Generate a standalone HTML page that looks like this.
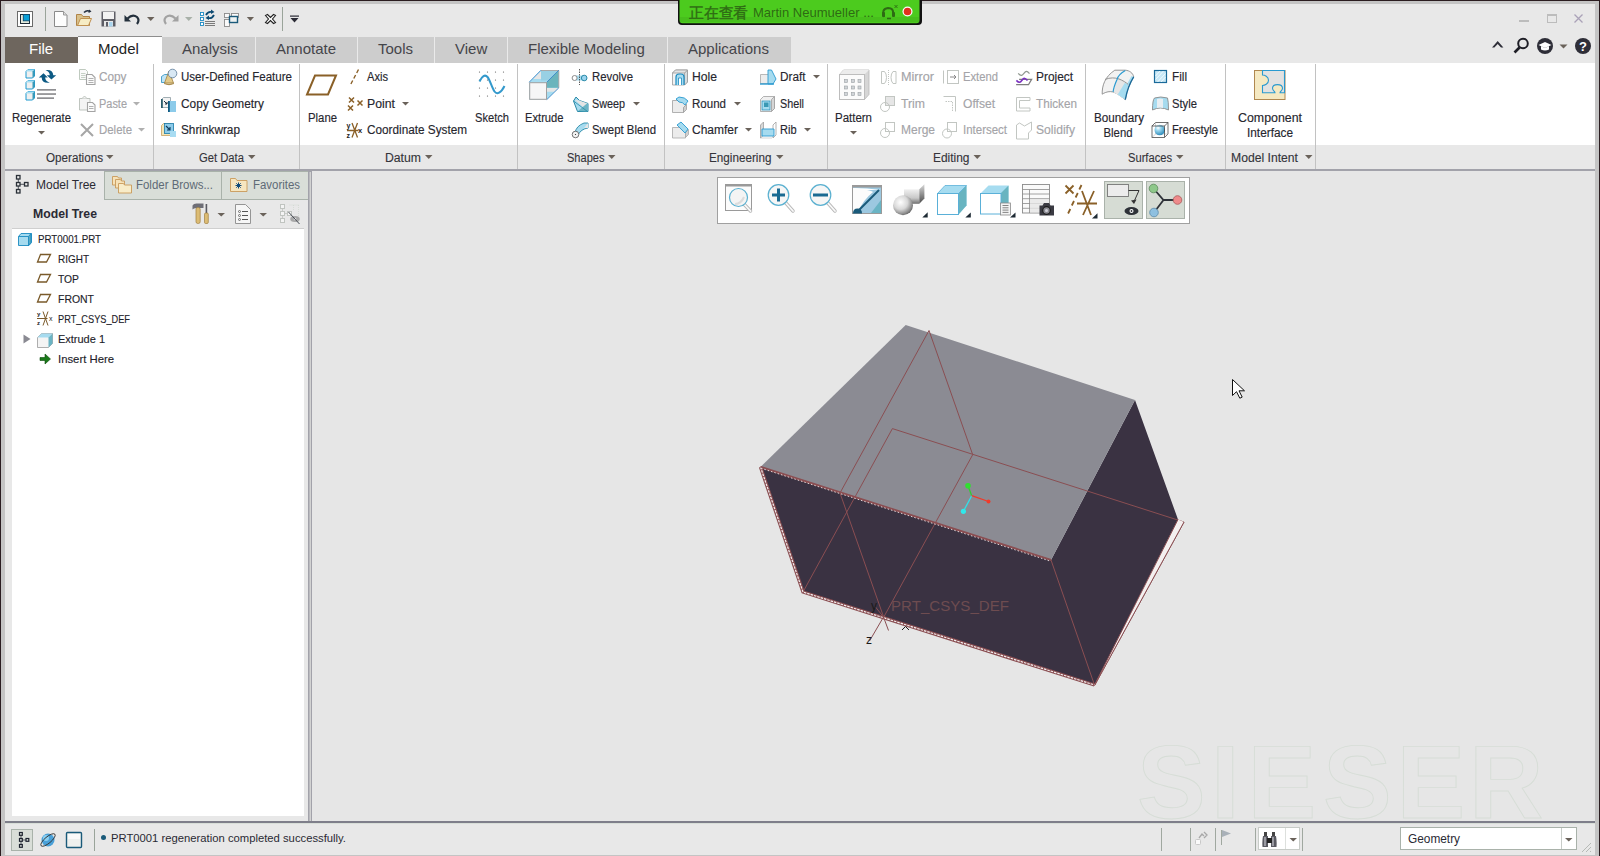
<!DOCTYPE html>
<html>
<head>
<meta charset="utf-8">
<title>Creo Parametric - PRT0001</title>
<style>
html,body{margin:0;padding:0;width:1600px;height:856px;overflow:hidden;background:#e8e8e8;}
svg{display:block;position:absolute;left:0;top:0;}
text{font-family:"Liberation Sans",sans-serif;}
.rb{font-size:12px;fill:#26262e;stroke:#26262e;stroke-width:0.15px;}
.dis{fill:#a4a4a8;stroke:#a4a4a8;}
.lb{font-size:12px;fill:#34343a;stroke:#34343a;stroke-width:0.12px;}
.tab{font-size:15px;fill:#45454a;}
.tr{font-size:10.5px;fill:#22222a;stroke:#22222a;stroke-width:0.12px;}
</style>
</head>
<body>
<svg width="1600" height="856" viewBox="0 0 1600 856">
<!-- ===== window frame ===== -->
<rect x="0" y="0" width="1600" height="856" fill="#c4c4c4"/>
<rect x="0" y="0" width="1600" height="1" fill="#2a1c20"/>
<rect x="0" y="0" width="1" height="856" fill="#2a1c20"/>
<rect x="1599" y="0" width="1" height="856" fill="#2a1c20"/>
<rect x="5" y="4" width="1590" height="852" fill="#e8e8e8"/>

<!-- ===== quick access bar ===== -->
<g id="qab">
<!-- app icon -->
<rect x="17.5" y="11.5" width="15" height="15" fill="#fff" stroke="#6a6a6a"/>
<rect x="20.5" y="14.5" width="9" height="9" fill="#e3eadc" stroke="#1c2a38"/>
<rect x="23.3" y="14.6" width="6.2" height="6.2" fill="#0aa0d8" stroke="#0e4a6e" stroke-width="0.9"/>
<rect x="45" y="7" width="1" height="24" fill="#9aa49a"/>
<!-- new -->
<path d="M54.5 11.5h9l3.5 3.5v11.5h-12.5z" fill="#fdfdfd" stroke="#8a8a8a"/>
<path d="M63.5 11.5v3.5h3.5" fill="#ddd" stroke="#9a9a9a"/>
<!-- open -->
<path d="M76.5 14.5h5l1.5 2h6.5v9h-13z" fill="#d8c08a" stroke="#b08448"/>
<path d="M77.5 25.5l3-7h11l-3 7z" fill="#f6ecc4" stroke="#c09050"/>
<path d="M84 12.5q3-3 6-1" fill="none" stroke="#263040" stroke-width="1.6"/>
<path d="M89 9.5l2.5 2-3 1.5z" fill="#263040"/>
<!-- save -->
<path d="M101.5 11.5h14v15h-14z" fill="#5e5e66"/>
<rect x="103" y="12" width="11" height="7" fill="#f2f2f2"/>
<rect x="104" y="21" width="9" height="5.5" fill="#e8e8e8"/>
<rect x="106" y="22" width="2" height="4.5" fill="#5e5e66"/>
<rect x="109" y="22" width="3.5" height="4.5" fill="#a8d4ee"/>
<!-- undo -->
<path d="M127.5 18.5q5-5 9.5-1.5q3 3 0 7" fill="none" stroke="#24303c" stroke-width="2.2"/>
<path d="M124.5 15v6.5h6.5z" fill="#24303c"/>
<path d="M147 17h7.5l-3.75 4z" fill="#6a625a"/>
<!-- redo -->
<path d="M175.5 18.5q-5-5-9.5-1.5q-3 3 0 7" fill="none" stroke="#a2a2a2" stroke-width="2.2"/>
<path d="M178.5 15v6.5h-6.5z" fill="#a2a2a2"/>
<path d="M185 17h7.5l-3.75 4z" fill="#a8b0a8"/>
<!-- regen -->
<g fill="#fff" stroke="#1d8ac4" stroke-width="0.9"><rect x="200.5" y="12.5" width="3" height="3"/><rect x="200.5" y="17.5" width="3" height="3"/><rect x="200.5" y="22.5" width="3" height="3"/></g>
<g fill="#7a7a7a"><rect x="205" y="21" width="10" height="1"/><rect x="205" y="23" width="10" height="1"/><rect x="205" y="25" width="10" height="1"/></g>
<path d="M206 15q2-4 6-3M214 15q-2 4-6 3" fill="none" stroke="#0d4a72" stroke-width="1.8"/>
<path d="M211 9.5l3.5 2.5-3.5 2zM209 15.5l-3.5 2.5 3.5 2z" fill="#0d4a72"/>
<!-- windows -->
<g fill="#fafafa" stroke="#8a8a8a" stroke-width="0.9"><rect x="224.5" y="13.5" width="5" height="4"/><rect x="231.5" y="13.5" width="7" height="4"/><rect x="224.5" y="19.5" width="5" height="7"/></g>
<rect x="229.5" y="16.5" width="8" height="6" fill="#eef2f2" stroke="#1a5a7a" stroke-width="1.4"/>
<path d="M246.8 17h7.2l-3.6 4z" fill="#6a625a"/>
<!-- close -->
<path d="M265.5 15.5l2-1 3 3 3-3 2 1-3 3.5 3 3.5-2 1-3-3-3 3-2-1 3-3.5z" fill="#fff" stroke="#222" stroke-width="1.1"/>
<rect x="282" y="7" width="1" height="24" fill="#9aa49a"/>
<rect x="290" y="15.5" width="9" height="1.2" fill="#2a2a35"/>
<path d="M290.5 18h8l-4 4.5z" fill="#2a2a35"/>
<!-- window controls -->
<rect x="1519" y="20" width="10" height="2" fill="#bcbcbc"/>
<rect x="1547.5" y="14.5" width="9" height="8" fill="none" stroke="#bcbcbc"/>
<rect x="1547" y="14" width="10" height="2" fill="#bcbcbc"/>
<path d="M1574.5 14.5l8 8M1582.5 14.5l-8 8" stroke="#aaa2b8" stroke-width="1.3"/>
<!-- right help icons -->
<path d="M1492 47.5L1497.7 41L1503.4 47.5L1501 47.5L1497.7 44L1494.4 47.5Z" fill="#2e2e38"/>
<circle cx="1523" cy="43.5" r="4.8" fill="none" stroke="#1e1e26" stroke-width="2"/>
<path d="M1519.5 47.5l-5 5" stroke="#1e1e26" stroke-width="2.6"/>
<circle cx="1545" cy="46" r="8" fill="#2e2e38"/>
<path d="M1538.5 45l6.5-3 6.5 3-6.5 3z" fill="#fff"/>
<path d="M1541 46v3.5q4 2 8 0v-3.5l-4 2z" fill="#fff"/>
<path d="M1559.5 44.5h8l-4 4z" fill="#6a625a"/>
<circle cx="1583" cy="46" r="8" fill="#2e2e38"/>
<text x="1579" y="51" style="font-size:13px;font-weight:bold;fill:#fff">?</text>
</g>

<!-- ===== green banner ===== -->
<g id="banner">
<path d="M678 0v21q0 4 4 4h236q4 0 4-4v-21z" fill="#111"/>
<path d="M679.5 0v20q0 3.3 3 3.3h234q3 0 3-3.3v-20z" fill="#4ccb1e"/>
<rect x="680" y="17" width="239" height="5" fill="#44b81a" opacity="0.6"/>
<text x="689" y="17.5" textLength="59" lengthAdjust="spacingAndGlyphs" style="font-size:15px;fill:#2e6a14;stroke:#2e6a14;stroke-width:0.35px">正在查看</text>
<text x="753" y="17" textLength="121" lengthAdjust="spacingAndGlyphs" style="font-size:13.5px;fill:#2e6a14">Martin Neumueller ...</text>
<path d="M884 17q-3-8 4-9q6 0 5 6" fill="none" stroke="#2e6a14" stroke-width="2"/>
<rect x="882" y="12" width="3" height="5" rx="1" fill="#2e6a14"/><rect x="892" y="12" width="3" height="5" rx="1" fill="#2e6a14"/>
<path d="M887 18.5h4" stroke="#2e6a14" stroke-width="1.5"/>
<path d="M894.5 5l3 3M897.5 5l-3 3" stroke="#2e6a14" stroke-width="0.9"/>
<circle cx="907.5" cy="11.5" r="5" fill="#fff"/>
<circle cx="907.5" cy="11.5" r="3.8" fill="#e0321c"/>
</g>

<!-- ===== tabs ===== -->
<g id="tabs">
<rect x="5" y="37" width="73" height="26" fill="#6e665e"/>
<text x="29" y="54" class="tab" style="fill:#ffffff">File</text>
<rect x="78" y="36" width="84" height="27" fill="#ffffff"/>
<rect x="78" y="36" width="84" height="1" fill="#8e8e8e"/>
<text x="98" y="54" class="tab" style="fill:#1e1e24">Model</text>
<rect x="162" y="37" width="629" height="26" fill="#cdcdcd"/>
<g fill="#eaeaea"><rect x="255" y="37" width="1" height="26"/>
<rect x="357" y="37" width="1" height="26"/>
<rect x="434" y="37" width="1" height="26"/>
<rect x="507" y="37" width="1" height="26"/>
<rect x="667" y="37" width="1" height="26"/></g>
<text x="182" y="54" class="tab">Analysis</text>
<text x="276" y="54" class="tab">Annotate</text>
<text x="378" y="54" class="tab">Tools</text>
<text x="455" y="54" class="tab">View</text>
<text x="528" y="54" class="tab">Flexible Modeling</text>
<text x="688" y="54" class="tab">Applications</text>
</g>

<!-- ===== ribbon body ===== -->
<g id="ribbon">
<rect x="5" y="63" width="1590" height="82" fill="#ffffff"/>
<rect x="5" y="145" width="1590" height="24" fill="#e8e8e8"/>
<rect x="5" y="169" width="1590" height="2.5" fill="#a2a2aa"/>
<g fill="#c2c2c2">
<rect x="153" y="64" width="1" height="105"/>
<rect x="299" y="64" width="1" height="105"/>
<rect x="517" y="64" width="1" height="105"/>
<rect x="664" y="64" width="1" height="105"/>
<rect x="827" y="64" width="1" height="105"/>
<rect x="1085" y="64" width="1" height="105"/>
<rect x="1225" y="64" width="1" height="105"/>
<rect x="1315" y="64" width="1" height="105"/>
</g>
<!-- group labels -->
<text x="46" y="162" textLength="57" lengthAdjust="spacingAndGlyphs" class="lb">Operations</text>
<text x="199" y="162" textLength="45" lengthAdjust="spacingAndGlyphs" class="lb">Get Data</text>
<text x="385" y="162" textLength="36" lengthAdjust="spacingAndGlyphs" class="lb">Datum</text>
<text x="567" y="162" textLength="37.5" lengthAdjust="spacingAndGlyphs" class="lb">Shapes</text>
<text x="709" y="162" textLength="62.5" lengthAdjust="spacingAndGlyphs" class="lb">Engineering</text>
<text x="933" y="162" textLength="36.5" lengthAdjust="spacingAndGlyphs" class="lb">Editing</text>
<text x="1128" y="162" textLength="44" lengthAdjust="spacingAndGlyphs" class="lb">Surfaces</text>
<text x="1231" y="162" textLength="67" lengthAdjust="spacingAndGlyphs" class="lb">Model Intent</text>
<g fill="#6a625a">
<path d="M106 155h7.5l-3.75 4z"/><path d="M248 155h7.5l-3.75 4z"/><path d="M425 155h7.5l-3.75 4z"/><path d="M608 155h7.5l-3.75 4z"/>
<path d="M776 155h7.5l-3.75 4z"/><path d="M973.5 155h7.5l-3.75 4z"/><path d="M1176 155h7.5l-3.75 4z"/><path d="M1305 155h7.5l-3.75 4z"/>
</g>
<!-- ribbon texts -->
<text x="12" y="122" textLength="59" lengthAdjust="spacingAndGlyphs" class="rb">Regenerate</text>
<text x="99" y="81" textLength="27.5" lengthAdjust="spacingAndGlyphs" class="rb dis">Copy</text>
<text x="99" y="108" textLength="28" lengthAdjust="spacingAndGlyphs" class="rb dis">Paste</text>
<text x="99" y="134" textLength="33" lengthAdjust="spacingAndGlyphs" class="rb dis">Delete</text>
<text x="181" y="81" textLength="111" lengthAdjust="spacingAndGlyphs" class="rb">User-Defined Feature</text>
<text x="181" y="108" textLength="83" lengthAdjust="spacingAndGlyphs" class="rb">Copy Geometry</text>
<text x="181" y="134" textLength="59" lengthAdjust="spacingAndGlyphs" class="rb">Shrinkwrap</text>
<text x="308" y="122" textLength="29" lengthAdjust="spacingAndGlyphs" class="rb">Plane</text>
<text x="367" y="81" textLength="21" lengthAdjust="spacingAndGlyphs" class="rb">Axis</text>
<text x="367" y="108" textLength="28" lengthAdjust="spacingAndGlyphs" class="rb">Point</text>
<text x="367" y="134" textLength="100" lengthAdjust="spacingAndGlyphs" class="rb">Coordinate System</text>
<text x="475" y="122" textLength="34" lengthAdjust="spacingAndGlyphs" class="rb">Sketch</text>
<text x="525" y="122" textLength="38.5" lengthAdjust="spacingAndGlyphs" class="rb">Extrude</text>
<text x="592" y="81" textLength="41" lengthAdjust="spacingAndGlyphs" class="rb">Revolve</text>
<text x="592" y="108" textLength="33" lengthAdjust="spacingAndGlyphs" class="rb">Sweep</text>
<text x="592" y="134" textLength="64" lengthAdjust="spacingAndGlyphs" class="rb">Swept Blend</text>
<text x="692" y="81" textLength="25" lengthAdjust="spacingAndGlyphs" class="rb">Hole</text>
<text x="692" y="108" textLength="34" lengthAdjust="spacingAndGlyphs" class="rb">Round</text>
<text x="692" y="134" textLength="46" lengthAdjust="spacingAndGlyphs" class="rb">Chamfer</text>
<text x="780" y="81" textLength="25.5" lengthAdjust="spacingAndGlyphs" class="rb">Draft</text>
<text x="780" y="108" textLength="24" lengthAdjust="spacingAndGlyphs" class="rb">Shell</text>
<text x="780" y="134" textLength="16.5" lengthAdjust="spacingAndGlyphs" class="rb">Rib</text>
<text x="835" y="122" textLength="37" lengthAdjust="spacingAndGlyphs" class="rb">Pattern</text>
<text x="901" y="81" textLength="33" lengthAdjust="spacingAndGlyphs" class="rb dis">Mirror</text>
<text x="901" y="108" textLength="24" lengthAdjust="spacingAndGlyphs" class="rb dis">Trim</text>
<text x="901" y="134" textLength="34" lengthAdjust="spacingAndGlyphs" class="rb dis">Merge</text>
<text x="963" y="81" textLength="35" lengthAdjust="spacingAndGlyphs" class="rb dis">Extend</text>
<text x="963" y="108" textLength="32" lengthAdjust="spacingAndGlyphs" class="rb dis">Offset</text>
<text x="963" y="134" textLength="44" lengthAdjust="spacingAndGlyphs" class="rb dis">Intersect</text>
<text x="1036" y="81" textLength="37" lengthAdjust="spacingAndGlyphs" class="rb">Project</text>
<text x="1036" y="108" textLength="41" lengthAdjust="spacingAndGlyphs" class="rb dis">Thicken</text>
<text x="1036" y="134" textLength="39" lengthAdjust="spacingAndGlyphs" class="rb dis">Solidify</text>
<text x="1094" y="122" textLength="50" lengthAdjust="spacingAndGlyphs" class="rb">Boundary</text>
<text x="1103.5" y="137" textLength="29" lengthAdjust="spacingAndGlyphs" class="rb">Blend</text>
<text x="1172" y="81" textLength="15" lengthAdjust="spacingAndGlyphs" class="rb">Fill</text>
<text x="1172" y="108" textLength="25" lengthAdjust="spacingAndGlyphs" class="rb">Style</text>
<text x="1172" y="134" textLength="46" lengthAdjust="spacingAndGlyphs" class="rb">Freestyle</text>
<text x="1238" y="122" textLength="64" lengthAdjust="spacingAndGlyphs" class="rb">Component</text>
<text x="1247" y="137" textLength="46" lengthAdjust="spacingAndGlyphs" class="rb">Interface</text>
<!-- small dropdown arrows -->
<g fill="#6a625a">
<path d="M38 131h7l-3.5 3.5z"/>
<path d="M133 102h7l-3.5 3.5z" fill="#b0b0b0"/><path d="M138 128h7l-3.5 3.5z" fill="#b0b0b0"/>
<path d="M402 102h7l-3.5 3.5z"/>
<path d="M633 102h7l-3.5 3.5z"/>
<path d="M734 102h7l-3.5 3.5z"/><path d="M745 128h7l-3.5 3.5z"/>
<path d="M813 75h7l-3.5 3.5z"/><path d="M804 128h7l-3.5 3.5z"/>
<path d="M850 131h7l-3.5 3.5z"/>
</g>
</g>
<g id="ricons">

<!-- Regenerate -->
<g transform="translate(25.5 69)">
<path d="M0.5 2.5l2-2h6.5v6.5l-2 2h-6.5z" fill="#f0f0f0" stroke="#1c9ad0" stroke-width="1"/>
<path d="M0.5 2.5l2-2h6.5l-2 2z" fill="#a8def2"/>
<path d="M9 0.5v6.5l-2 2v-6.5z" fill="#3a9ab8"/>
</g>
<g transform="translate(25.5 80)">
<path d="M0.5 2.5l2-2h6.5v6.5l-2 2h-6.5z" fill="#f0f0f0" stroke="#1c9ad0" stroke-width="1"/>
<path d="M0.5 2.5l2-2h6.5l-2 2z" fill="#a8def2"/>
<path d="M9 0.5v6.5l-2 2v-6.5z" fill="#3a9ab8"/>
</g>
<g transform="translate(25.5 91)">
<path d="M0.5 2.5l2-2h6.5v6.5l-2 2h-6.5z" fill="#f0f0f0" stroke="#1c9ad0" stroke-width="1"/>
<path d="M0.5 2.5l2-2h6.5l-2 2z" fill="#a8def2"/>
<path d="M9 0.5v6.5l-2 2v-6.5z" fill="#3a9ab8"/>
</g>
<g fill="#8f8f92"><rect x="37" y="89" width="19" height="1.7"/><rect x="37" y="93.2" width="19" height="1.7"/><rect x="37" y="97.3" width="17" height="1.7"/></g>
<path d="M45.5 70.2Q52.8 69.3 53.3 75.3H56.2L51.4 79.4L46.8 75.3H49.8Q49.5 71.3 45.5 70.2Z" fill="#0d5a84"/>
<path d="M38.8 77.5L43.5 73.2L47.8 77.5H45.1Q45.4 81.2 49.8 82.7Q41.8 83.8 41.7 77.5Z" fill="#0d5a84"/>
<!-- Copy / Paste / Delete (disabled) -->
<path d="M79.5 69.5h6l2 2v8h-8z" fill="#fafafa" stroke="#b8c4b8" stroke-width="0.9"/>
<path d="M81 73.5h4.5M81 75.5h4.5M81 77.5h4.5" stroke="#c0ccc0" stroke-width="0.9"/>
<path d="M86.5 74.5h5.5l3 3v7h-8.5z" fill="#fcfcfc" stroke="#a4a4a4" stroke-width="1.1"/>
<path d="M88.5 78.5h5M88.5 80.5h5M88.5 82.5h5" stroke="#a8a8a8" stroke-width="0.9"/>
<path d="M79.5 98.5h10.5v11.5h-10.5z" fill="#f4f4f4" stroke="#b8beb8" stroke-width="0.9"/>
<path d="M82 98.5l2.5-2.5 2.5 2.5" fill="#f4f4f4" stroke="#b8beb8" stroke-width="0.9"/>
<path d="M87.5 102.5h5l2.5 2.5v6.5h-7.5z" fill="#fcfcfc" stroke="#a4a4a4" stroke-width="1.1"/>
<path d="M89 106.5h4.5M89 108.5h4.5" stroke="#a8a8a8" stroke-width="0.9"/>
<path d="M81 124l12 12M93 124l-12 12" stroke="#a6a6a6" stroke-width="2"/>
<!-- UDF -->
<path d="M161.5 76.5l3-2h7v6l-3 2h-7z" fill="#bfe4f6" stroke="#2a8ec0" stroke-width="0.8"/>
<path d="M169 71l-4.5 12h9z" fill="#e2c98a" stroke="#a08040" stroke-width="0.8"/>
<circle cx="172.5" cy="73.5" r="4.3" fill="#d8e8f4" stroke="#5a7a98" stroke-width="0.8"/>
<path d="M164 83.5q5 2.5 10 0" fill="#c8a860" stroke="#98783a" stroke-width="0.8"/>
<!-- Copy Geometry -->
<path d="M161.5 99.5l2-2h7v8l-2 2h-7z" fill="#f2f2f2" stroke="#8a9aa2" stroke-width="0.8"/>
<rect x="161" y="99" width="1.8" height="9" fill="#2a5a6a"/>
<path d="M164 101l3 3M167 102v2h-2" stroke="#1a2a3a" stroke-width="1" fill="none"/>
<rect x="169" y="101" width="7" height="11" fill="#8ccbea"/>
<rect x="168" y="101" width="1.8" height="11" fill="#0e5a82"/>
<!-- Shrinkwrap -->
<path d="M161.5 125.5l2-2h7v12h-9z" fill="#f4e6b8" stroke="#c8a060" stroke-width="0.8"/>
<rect x="164.5" y="123.5" width="9" height="10" fill="#8ccbea" stroke="#1a7aa8" stroke-width="0.8"/>
<path d="M166 126l4 4M170 127v3h-3" stroke="#0e3a5a" stroke-width="1.1" fill="none"/>
<rect x="170" y="131" width="6" height="6" fill="#a8dcf2"/>
<!-- Plane -->
<path d="M315 75.5h21l-8 19h-21z" fill="none" stroke="#8a6028" stroke-width="2"/>
<!-- Axis -->
<path d="M358.5 69.5l-1.8 3.5M355.6 75l-1.8 3.5M352.7 80.5l-1.8 3.5" stroke="#8a6028" stroke-width="1.4"/>
<!-- Point -->
<g stroke="#8a6028" stroke-width="1.5"><path d="M349 97.5l5 5M354 97.5l-5 5M357.5 100.5l5 5M362.5 100.5l-5 5M348 105.5l5 5M353 105.5l-5 5"/></g>
<!-- Coordinate System -->
<path d="M352 123l5.5 14.5M357.5 123l-5.5 14.5M347 130.5h11.5" stroke="#8a6028" stroke-width="1.3"/>
<text x="346.5" y="128" style="font-size:7px;fill:#222;font-weight:bold">y</text>
<text x="346.5" y="137.5" style="font-size:7px;fill:#222;font-weight:bold">z</text>
<text x="358" y="133" style="font-size:7.5px;fill:#222;font-weight:bold">x</text>
<!-- Sketch -->
<g fill="#555"><circle cx="479.5" cy="72" r="0.6"/><circle cx="487.5" cy="72" r="0.6"/><circle cx="495.5" cy="72" r="0.6"/><circle cx="503.5" cy="72" r="0.6"/>
<circle cx="479.5" cy="80" r="0.6"/><circle cx="487.5" cy="80" r="0.6"/><circle cx="495.5" cy="80" r="0.6"/><circle cx="503.5" cy="80" r="0.6"/>
<circle cx="479.5" cy="88" r="0.6"/><circle cx="487.5" cy="88" r="0.6"/><circle cx="495.5" cy="88" r="0.6"/><circle cx="503.5" cy="88" r="0.6"/>
<circle cx="479.5" cy="96" r="0.6"/><circle cx="487.5" cy="96" r="0.6"/><circle cx="495.5" cy="96" r="0.6"/><circle cx="503.5" cy="96" r="0.6"/></g>
<path d="M479.5 81.5C482 76 485 74 487.5 77C490 80 492 88 494.5 91.5C497 95 501 93 504.5 86" fill="none" stroke="#3399cc" stroke-width="2"/>
<!-- Extrude -->
<path d="M529.2 82.2L541 70.2H558.8V87.8L546.8 99.6H529.2Z" fill="#a6dcf0"/>
<rect x="541" y="70.5" width="17.8" height="10" fill="#98d0e4"/>
<path d="M546.8 82.2L558.8 70.2V87.8H546.8Z" fill="#6ab4bc"/>
<path d="M546.8 88H558.8L555 91.8H546.8Z" fill="#e4e6e6"/>
<path d="M533 79L541 71V79Z" fill="#e6e6e6"/>
<path d="M541 70.5H558.8V87.8" fill="none" stroke="#a8a8a8" stroke-width="1"/>
<path d="M529.2 82.2L541 70.2M546.8 82.2L558.8 70.2M558.8 87.8L546.8 99.6" fill="none" stroke="#3a88c8" stroke-width="0.9"/>
<rect x="529.7" y="82.7" width="16.8" height="16.6" fill="#f6f6f6" stroke="#a0a0a0" stroke-width="1"/>
<!-- Revolve -->
<path d="M576 75.5h8q3 0 3 2.5t-3 2.5h-8z" fill="#a6dbef"/>
<circle cx="574.6" cy="78" r="2.5" fill="#fff" stroke="#8a8a8a" stroke-width="1"/>
<circle cx="584.2" cy="78" r="2.8" fill="#9ad4ee" stroke="#2a8aa8" stroke-width="1"/>
<path d="M579.5 69v16" stroke="#333" stroke-width="0.8" stroke-dasharray="1.5 1"/>
<!-- Sweep -->
<path d="M573.5 101l2.5-4 3.5 3.5 8.5 3v8h-10.5z" fill="#a6dbef" stroke="#2a8aa8" stroke-width="1"/>
<path d="M575 100l4.5 0.5 8 3-4 4z" fill="#e4e4e4"/>
<path d="M578 111l9.5-8v8.5z" fill="#6ab4c4"/>
<path d="M573.5 101l14 10.5" stroke="#2a8aa8" stroke-width="0.8"/>
<!-- Swept Blend -->
<path d="M575 133q1-7 9-10h4v5q-7 1-10 7z" fill="#a6dbef" stroke="#2a8aa8" stroke-width="0.9"/>
<path d="M588 123v5h-4z" fill="#e4e4e4"/>
<circle cx="575.5" cy="134.5" r="3.3" fill="#f2f2f2" stroke="#666" stroke-width="0.9"/>
<circle cx="575.5" cy="134.5" r="0.6" fill="#222"/>
<!-- Engineering: Hole -->
<g stroke="#9a9a9a" stroke-width="0.8">
<path d="M672.5 73l3-3h12v12l-3 3h-12z" fill="#f2f2f2"/>
<path d="M684.5 73l3-3v12l-3 3z" fill="#d6dde0"/>
<path d="M672.5 73l3-3h12l-3 3z" fill="#e4e4e4"/>
</g>
<path d="M676 85v-8q0-3 3-3h2q3 0 3 3v8" fill="#a6dbef" stroke="#1a8ac0" stroke-width="1.2"/>
<path d="M678.5 85v-7h3v7" fill="#fff" stroke="#1a8ac0" stroke-width="0.8"/>
<!-- Round -->
<g stroke="#a0a0a0" stroke-width="0.8">
<path d="M672.5 100.5h7q5 0 7 4l-3 3v5h-11z" fill="#ececec"/>
<path d="M683.5 107.5l3-3v5l-3 3z" fill="#d0d0d0"/>
</g>
<path d="M676 99l3-2q6 0 9 4l-3 4q-2-3-6-3z" fill="#a6dbef" stroke="#2a9ad0" stroke-width="0.9"/>
<!-- Chamfer -->
<g stroke="#a8a8a8" stroke-width="0.8">
<path d="M672.5 127.5h8l5 5v5.5h-13z" fill="#ececec"/>
<path d="M685.5 132.5l3-3v5l-3 3z" fill="#d0d0d0"/>
</g>
<path d="M677 125l4-3 7 7-3 4z" fill="#a6dbef" stroke="#2a9ad0" stroke-width="0.9"/>
<!-- Draft -->
<g stroke="#a8a8a8" stroke-width="0.8">
<path d="M760.5 74.5h8v9h-8z" fill="#ececec"/>
</g>
<path d="M768 70l3.5 0 4.5 9-3 5h-5z" fill="#a6dbef" stroke="#2a9ad0" stroke-width="0.9"/>
<path d="M760 84h14" stroke="#2a9ad0" stroke-width="1.4"/>
<!-- Shell -->
<g stroke="#a0a0a0" stroke-width="0.8">
<path d="M760.5 99.5l3-3h11v12l-3 3h-11z" fill="#f0f0f0"/>
<path d="M771.5 99.5l3-3v12l-3 3z" fill="#d6d6d6"/>
</g>
<rect x="762" y="101" width="8" height="9" fill="#a6dbef" stroke="#1a8ab8" stroke-width="0.7"/>
<rect x="764" y="102.5" width="4.5" height="4.5" fill="#3a98b4"/>
<!-- Rib -->
<path d="M760.5 125l3-3v13l-3 3z" fill="#d8d8d8" stroke="#a0a0a0" stroke-width="0.8"/>
<path d="M773 125l3-3v13l-3 3z" fill="#fff" stroke="#a0a0a0" stroke-width="0.8"/>
<path d="M762 129h12v7h-12z" fill="#a6dbef" stroke="#2a9ad0" stroke-width="0.9"/>
<path d="M760.5 138h12" stroke="#999" stroke-width="0.8" stroke-dasharray="1 1"/>
<!-- Pattern -->
<path d="M839.5 74.5l4-4.5h25.5v24.5l-4.5 5z" fill="#d6d6d6" stroke="#b8b8b8" stroke-width="0.8"/>
<path d="M839.5 74.5l4-4.5h25.5l-4.5 4.5z" fill="#ececec"/>
<rect x="839.5" y="74.5" width="25" height="25" fill="#fbfbfb" stroke="#bdbdbd" stroke-width="1"/>
<g fill="#d0d4d8" stroke="#9aa0a4" stroke-width="0.6">
<rect x="844.5" y="79.5" width="3" height="3"/><rect x="851.5" y="79.5" width="3" height="3"/><rect x="858" y="79.5" width="3" height="3"/>
<rect x="844.5" y="86" width="3" height="3"/><rect x="851.5" y="86" width="3" height="3"/><rect x="858" y="86" width="3" height="3"/>
<rect x="844.5" y="92.5" width="3" height="3"/><rect x="851.5" y="92.5" width="3" height="3"/><rect x="858" y="92.5" width="3" height="3"/>
</g>
<!-- disabled editing icons -->
<g fill="none" stroke="#c2c6c2" stroke-width="1">
<path d="M881.5 71.5h3q2 2 2 6t-2 6h-3zM896 71.5h-3q-2 2-2 6t2 6h3z"/>
<path d="M888.5 70v15" stroke-dasharray="1 1"/>
<rect x="885.5" y="96.5" width="9" height="9" fill="#e6e6e6"/><circle cx="885" cy="107" r="4.5"/>
<rect x="885.5" y="122.5" width="9" height="9"/><circle cx="885" cy="133" r="4.5"/>
<rect x="947.5" y="70.5" width="11" height="13"/><path d="M943.5 70.5v13"/>
<path d="M943.5 96.5h12v15" /><path d="M945.5 101.5h7v10" stroke-dasharray="1.5 1"/>
<rect x="947.5" y="122.5" width="9" height="9"/><circle cx="947" cy="133.5" r="4.5"/>
<path d="M1030 97.5h-13.5v13.5h13.5v-3h-10.5v-7.5h10.5z"/>
<path d="M1016.5 125l3-2 5 3 7-4v8l-3 3v6h-12z"/>
</g>
<path d="M950 77h6M954 75l2 2-2 2" fill="none" stroke="#888" stroke-width="1"/>
<!-- Project -->
<path d="M1018.2 73.4C1019.5 75 1020.5 75.6 1021.6 75.4C1023.5 75 1024.5 71.3 1026.4 71.3C1027.8 71.3 1028.7 72.6 1029.5 73.6" fill="none" stroke="#909890" stroke-width="1.2"/>
<path d="M1019.1 79.3H1031.6L1028.5 84.7H1016.1" fill="none" stroke="#7e7e7e" stroke-width="1.3"/>
<path d="M1016.4 80.4C1017.5 81.6 1018.6 82.3 1019.7 82.2C1021.5 82 1022.5 78.3 1024.3 78.3C1025.6 78.3 1026.6 79.5 1027.5 80.6" fill="none" stroke="#7a30c0" stroke-width="1.6"/>
<!-- Boundary Blend -->
<path d="M1102.2 94.2C1102 86 1104.5 77 1114.8 70.2H1125.3C1129.5 70.5 1133 73 1133.7 76.9C1130.5 82 1127 90 1125.3 99.6C1121 96.5 1116 92 1110.6 91.6C1107 91.5 1104 93 1102.2 94.2Z" fill="#f2f2f2" stroke="#8a8a8a" stroke-width="0.9"/>
<path d="M1117.7 77.8L1128.3 84.5L1125.3 99.6L1113.1 92Z" fill="#e6e6e6"/>
<path d="M1124.9 82.8L1128.3 84.9L1125.3 99.6L1117.7 94.6Z" fill="#a6dcf0"/>
<path d="M1131.5 76L1133.7 76.9L1128.3 84.9L1127 84Z" fill="#a6dcf0"/>
<path d="M1105.1 79.4C1110 77.5 1115 77.5 1119 79C1123 80.5 1126 82.5 1128.3 84.5" fill="none" stroke="#8a8a8a" stroke-width="0.9"/>
<path d="M1125.3 70.6C1121 73 1118 76 1117 79.5C1115 84 1113.5 88 1113.1 92" fill="none" stroke="#2a9ad0" stroke-width="1.2"/>
<path d="M1133.7 76.9C1130.5 82 1127 90 1125.3 99.6" fill="none" stroke="#1a6a9a" stroke-width="1.3"/>
<!-- Fill -->
<rect x="1154.5" y="70.5" width="12" height="12" fill="#c8e8f6" stroke="#1a6a9a" stroke-width="1.2"/>
<path d="M1155.5 76l4.5-5M1155.5 79.5l8-8.5M1157.5 82l8-8.5M1161 82l4.5-5" stroke="#f4fbff" stroke-width="0.9"/>
<!-- Style -->
<path d="M1152.5 110q0-10 2-12q6-2 13 0q1 3 1 12q-8-4-16 0z" fill="#a6dbef" stroke="#8a8a8a" stroke-width="0.9"/>
<path d="M1157 99q3-1 6 0v9q-3-1-6 0z" fill="#e8eef2"/>
<!-- Freestyle -->
<defs><radialGradient id="fsph" cx="0.35" cy="0.3" r="0.75"><stop offset="0" stop-color="#ffffff"/><stop offset="0.35" stop-color="#9ad6ee"/><stop offset="1" stop-color="#2a88b8"/></radialGradient></defs>
<g fill="none" stroke="#333" stroke-width="0.7"><path d="M1155.5 122.5h12.5v11.5M1152 126l3.5-3.5M1164.5 126l3.5-3.5M1164.5 137.5l3.5-3.5"/><path d="M1155.5 122.5v11.5h12.5M1152 137.5l3.5-3.5" stroke="#aaa" stroke-width="0.5"/></g>
<circle cx="1159.7" cy="130" r="5.2" fill="url(#fsph)"/>
<rect x="1152" y="126" width="12.5" height="11.5" fill="none" stroke="#333" stroke-width="0.7"/>
<!-- Component Interface -->
<rect x="1254.5" y="70.5" width="30.5" height="29" fill="#f5e9c2" stroke="#b08850" stroke-width="1"/>
<path d="M1262.5 70.5H1284.5V92.75H1280C1280 91.5 1282.5 90.5 1282.5 88.3C1282.5 85.8 1280 84.6 1277.5 84.6C1275 84.6 1272.5 85.8 1272.5 88.3C1272.5 90.5 1275 91.5 1275 92.75H1262.5V85.5C1264.5 85.5 1268.5 84 1268.5 80.2C1268.5 76.5 1264.5 75 1262.5 75Z" fill="#e2e2e2" stroke="#2a9ad0" stroke-width="1.1"/>
</g>

<!-- ===== left panel ===== -->
<g id="leftpanel">
<rect x="5" y="171" width="304" height="650" fill="#e8e8e8"/>
<!-- tabs -->
<rect x="104.5" y="171.5" width="204" height="28" fill="#d9ded8" stroke="#a9b2aa" stroke-width="1"/>
<rect x="221" y="172" width="1" height="27" fill="#a9b2aa"/>
<g fill="none" stroke="#2a3038" stroke-width="1.3">
<rect x="16.5" y="175.5" width="3.5" height="3.5"/><rect x="16.5" y="182.5" width="3.5" height="3.5"/><rect x="16.5" y="189.5" width="3.5" height="3.5"/><rect x="24.5" y="182.5" width="3.5" height="3.5"/>
</g>
<path d="M18.3 179v3.5M18.3 186v3.5M20 184.3h4.5" stroke="#2a3038" stroke-width="0.8"/>
<text x="36" y="189" textLength="60" lengthAdjust="spacingAndGlyphs" style="font-size:12px;fill:#2a2a34">Model Tree</text>
<!-- folder browser icon -->
<g stroke="#c89a5a" stroke-width="0.9">
<path d="M112.5 176.5h5l1 1.5h3v7h-9z" fill="#f6e2b8"/>
<path d="M115.5 179.5h5l1 1.5h3v7h-9z" fill="#f6e2b8"/>
<path d="M118.5 183.5h5l1 1.5h7v8h-13z" fill="#f8ecc8"/>
</g>
<text x="136" y="189" textLength="77" lengthAdjust="spacingAndGlyphs" style="font-size:12px;fill:#5e6a76">Folder Brows...</text>
<!-- favorites icon -->
<path d="M230.5 178.5h5l1.5 2h10v11h-16.5z" fill="#f6e6c0" stroke="#c89a5a" stroke-width="0.9"/>
<path d="M238.5 182.5v6M235.5 185.5h6M236.3 183.3l4.4 4.4M240.7 183.3l-4.4 4.4" stroke="#0e4a7a" stroke-width="1"/>
<text x="253" y="189" textLength="47" lengthAdjust="spacingAndGlyphs" style="font-size:12px;fill:#5e6a76">Favorites</text>
<!-- header -->
<text x="33" y="218" textLength="64" lengthAdjust="spacingAndGlyphs" style="font-size:12px;font-weight:bold;fill:#2a2a34">Model Tree</text>
<!-- hammer & screwdriver -->
<path d="M192.5 205.5q1-2 4-2h7v4.5h-7q-3 0-4 1.5z" fill="#6e6e76"/>
<rect x="196" y="207.5" width="4.2" height="16" rx="1.8" fill="#dcbc74" stroke="#a08040" stroke-width="0.7"/>
<rect x="205.6" y="204" width="1.6" height="10" fill="#5a5a62"/>
<rect x="204.5" y="213" width="3.8" height="10.5" rx="1.2" fill="#dcbc74" stroke="#a08040" stroke-width="0.7"/>
<path d="M217.5 213h7.5l-3.75 3.5z" fill="#6a625a"/>
<!-- list icon -->
<path d="M235.5 204.5h10l5 5v14h-15z" fill="#f6f6f6" stroke="#8a8a8a" stroke-width="0.9"/>
<g fill="none" stroke="#555" stroke-width="0.8"><circle cx="239.5" cy="211.5" r="1"/><circle cx="239.5" cy="215.5" r="1"/><circle cx="239.5" cy="219.5" r="1"/></g>
<path d="M242 211.5h6M242 215.5h6M242 219.5h6" stroke="#555" stroke-width="1"/>
<path d="M259.5 213h7.5l-3.75 3.5z" fill="#6a625a"/>
<!-- hide icon (disabled) -->
<g fill="#f4f4f4" stroke="#c0c4c0" stroke-width="1"><rect x="280.5" y="204.5" width="4" height="4"/><rect x="280.5" y="211.5" width="4" height="4"/><rect x="280.5" y="218.5" width="4" height="4"/><rect x="287.5" y="211.5" width="4" height="4"/></g>
<path d="M282.5 208.5v3M282.5 215.5v3M284.5 213.5h3" stroke="#c0c4c0" stroke-width="0.8"/>
<path d="M289.5 205h9M298.5 205v17M293.5 205v6" fill="none" stroke="#d0d8d0" stroke-width="0.8" stroke-dasharray="1 1"/>
<ellipse cx="295" cy="219" rx="4.8" ry="3" fill="#a8a8a8"/>
<circle cx="295" cy="219" r="1.3" fill="#e0e0e0"/>
<path d="M288.5 212l11 12" stroke="#3a3e48" stroke-width="0.9"/>
<!-- tree area -->
<rect x="12" y="228" width="292" height="1" fill="#cfcfcf"/>
<rect x="12" y="229" width="292" height="587" fill="#ffffff"/>
<!-- PRT icon -->
<path d="M18.5 236.5l2.5-3h10.5v9l-2.5 3h-10.5z" fill="#a6dbef" stroke="#1a8ac0" stroke-width="0.9"/>
<path d="M28.5 236.5l2.5-3v9l-2.5 3z" fill="#5aaac4" stroke="#1a8ac0" stroke-width="0.9"/>
<path d="M18.5 236.5h10" stroke="#1a8ac0" stroke-width="0.9"/>
<text x="38" y="243" textLength="63" lengthAdjust="spacingAndGlyphs" class="tr">PRT0001.PRT</text>
<!-- datum planes -->
<g fill="none" stroke="#7a5a2a" stroke-width="1.3">
<path d="M40.5 254.5h10l-4 7.5h-9z"/>
<path d="M40.5 274.5h10l-4 7.5h-9z"/>
<path d="M40.5 294.5h10l-4 7.5h-9z"/>
</g>
<text x="58" y="263" textLength="31" lengthAdjust="spacingAndGlyphs" class="tr">RIGHT</text>
<text x="58" y="283" textLength="21" lengthAdjust="spacingAndGlyphs" class="tr">TOP</text>
<text x="58" y="303" textLength="36" lengthAdjust="spacingAndGlyphs" class="tr">FRONT</text>
<!-- csys -->
<path d="M43 311.5l5 14M48 311.5l-5 14M37 318.5h10.5" stroke="#7a5a2a" stroke-width="1"/>
<text x="37" y="316" style="font-size:6px;font-weight:bold;fill:#222">y</text>
<text x="37" y="325" style="font-size:6px;font-weight:bold;fill:#222">z</text>
<text x="49" y="321" style="font-size:7px;fill:#222">x</text>
<text x="58" y="323" textLength="72" lengthAdjust="spacingAndGlyphs" class="tr">PRT_CSYS_DEF</text>
<!-- extrude -->
<path d="M23.5 334.5v9l7-4.5z" fill="#8a8a92"/>
<path d="M37.5 337.5l4-4h11v10l-4 4h-11z" fill="#f4f4f4" stroke="#9a9a9a" stroke-width="0.8"/>
<path d="M37.5 337.5l4-4h11l-4 4z" fill="#a6dbef"/>
<path d="M48.5 337.5l4-4v10l-4 4z" fill="#6ab4c4"/>
<text x="58" y="343" textLength="47" lengthAdjust="spacingAndGlyphs" class="tr">Extrude 1</text>
<!-- insert here -->
<path d="M40 357.5h5v-3.5l5.5 5-5.5 5v-3.5h-5z" fill="#1a7a1a" stroke="#0a4a0a" stroke-width="0.6"/>
<text x="58" y="363" textLength="56" lengthAdjust="spacingAndGlyphs" class="tr">Insert Here</text>
<!-- separator to graphics -->
<rect x="308" y="171" width="4" height="650" fill="#a2a2aa"/>
<rect x="309.5" y="172" width="1.5" height="649" fill="#d2d2d2"/>
</g>

<!-- ===== graphics ===== -->
<g id="graphics">
<rect x="312" y="171" width="1283" height="650" fill="#e6e6e6"/>
<!-- watermark -->
<text x="1137 1211 1247.5 1323 1396.5 1469" y="818" style="font-size:103px;font-weight:bold;fill:none;stroke:#d6ddd6;stroke-width:0.9">SIESER</text>
<!-- box -->
<path d="M760.5 467L1051 560L1135 400L1178 519.5L1094.5 685L803 592Z" fill="#3a3242"/>
<path d="M905.7 325L1135 400L1051 560L760.5 467Z" fill="#8b8b93"/>
<!-- datum planes -->
<g fill="none" stroke="#8a4e52" stroke-width="1">
<path d="M929 330.5L972.7 454.7L883.7 617.2L840 493Z"/>
<path d="M892.4 428.6L1184 522L1094.6 685.4L803 592Z"/>
<path d="M760.5 467L1051 560L1094.5 685L803 592Z"/>
</g>
<path d="M1178 519.5L1184 522L1094.6 685.4Z" fill="#f4f0f0"/>
<path d="M1178 519.5L1094.5 685M1184 522L1094.6 685.4" fill="none" stroke="#8a4e52" stroke-width="1"/>
<path d="M760.5 467L803 592L1094.5 685" fill="none" stroke="#8a4e52" stroke-width="3.4" stroke-linejoin="miter"/>
<path d="M760.5 467L803 592L1094.5 685" fill="none" stroke="#f2eeee" stroke-width="1.2" stroke-linejoin="miter" stroke-dasharray="2.5 1"/>
<path d="M760.5 467L1051 560" fill="none" stroke="#8a4e52" stroke-width="2.2"/>
<path d="M761 468.2L1050.5 561.2" fill="none" stroke="#e8e2e4" stroke-width="0.9" stroke-dasharray="1.5 2"/>
<!-- csys on box -->
<path d="M883.5 617l-14 24M883.5 617l5 13.5M883.5 617l-8-10" stroke="#8a4e52" stroke-width="1"/>
<text x="891" y="611" textLength="118" lengthAdjust="spacingAndGlyphs" style="font-size:14px;fill:#6e4c50">PRT_CSYS_DEF</text>
<text x="871" y="610" style="font-size:12px;fill:#1a1a1a">y</text>
<text x="866" y="644" style="font-size:12px;fill:#1a1a1a">z</text>
<path d="M902 630l3.5-3.5 3.5 3.5" fill="none" stroke="#1a1a1a" stroke-width="1"/>
<!-- spin center -->
<path d="M971.7 495.7L968 485.7" stroke="#30d030" stroke-width="1.3"/>
<path d="M971.7 495.7L963.4 511.3" stroke="#30e0e8" stroke-width="1.3"/>
<path d="M971.7 495.7L988.5 501.5" stroke="#f03a2a" stroke-width="1.3"/>
<circle cx="968" cy="485.7" r="2.8" fill="#30e030"/>
<circle cx="963.4" cy="511.3" r="2.6" fill="#30e8ea"/>
<circle cx="988.5" cy="501.5" r="2" fill="#f03a2a"/>
<!-- cursor -->
<path d="M1232.5 379.5v16l4-3.8 3.3 6.5 2.4-1.1-3.2-6.3h5.5z" fill="#fff" stroke="#111" stroke-width="1"/>
<!-- graphics toolbar -->
<rect x="717.5" y="177.5" width="472" height="46" fill="#ffffff" stroke="#a0a0a0"/>
<rect x="1104.5" y="181.5" width="38" height="37" fill="#d6dcd4" stroke="#aab2aa"/>
<rect x="1146.5" y="181.5" width="38" height="37" fill="#d6dcd4" stroke="#aab2aa"/>
<!-- refit -->
<rect x="725.5" y="184.5" width="26" height="26" fill="#fcfcfc" stroke="#9a9a9a"/>
<rect x="725.5" y="184.5" width="26" height="2" fill="#9a9a9a"/>
<path d="M743 203l7.5 8" stroke="#b8b8b8" stroke-width="3.5" stroke-linecap="round"/>
<path d="M743 203l7.5 8" stroke="#fafafa" stroke-width="1.8" stroke-linecap="round"/>
<circle cx="738.5" cy="197.5" r="9" fill="#f4f4f4" stroke="#5ab0d0" stroke-width="1.2"/>
<path d="M735 204q6 0 9-7" fill="none" stroke="#dcdcdc" stroke-width="2"/>
<!-- zoom in -->
<path d="M785 202l8 9" stroke="#b8b8b8" stroke-width="3.5" stroke-linecap="round"/>
<path d="M785 202l8 9" stroke="#fafafa" stroke-width="1.8" stroke-linecap="round"/>
<circle cx="778.5" cy="195" r="10.3" fill="#f6f6f6" stroke="#5ab0d0" stroke-width="1.2"/>
<path d="M778.5 188.5v13M772 195h13" stroke="#1a6a92" stroke-width="3"/>
<!-- zoom out -->
<path d="M827 202l8 9" stroke="#b8b8b8" stroke-width="3.5" stroke-linecap="round"/>
<path d="M827 202l8 9" stroke="#fafafa" stroke-width="1.8" stroke-linecap="round"/>
<circle cx="820.5" cy="195" r="10.3" fill="#f6f6f6" stroke="#5ab0d0" stroke-width="1.2"/>
<path d="M813 195h15" stroke="#1a6a92" stroke-width="3"/>
<!-- reorient -->
<rect x="852.5" y="185.5" width="29" height="28" fill="#9cc8e0" stroke="#9a9a9a"/>
<rect x="852.5" y="185.5" width="29" height="2" fill="#9a9a9a"/>
<path d="M853 188q14 0 28 2v0h-28z" fill="#fff"/>
<path d="M853 188q18 2 20 4q-10 8-15 20h-5z" fill="#fcfcfc"/>
<path d="M881 200v13h-10z" fill="#6ab4c4"/>
<path d="M858 211l21-21" stroke="#1a5a7a" stroke-width="2"/>
<path d="M853 213.5q0-5 4.5-5q4.5 0 4.5 5z" fill="#1a5a7a"/>
<!-- display style -->
<defs>
<radialGradient id="sph" cx="0.38" cy="0.35" r="0.7"><stop offset="0" stop-color="#ffffff"/><stop offset="0.5" stop-color="#d8d8d8"/><stop offset="0.85" stop-color="#8a8a8a"/><stop offset="1" stop-color="#5a5a5a"/></radialGradient>
<linearGradient id="bxf" x1="0" y1="0" x2="0" y2="1"><stop offset="0" stop-color="#f0f0f0"/><stop offset="0.6" stop-color="#c8c8c8"/><stop offset="1" stop-color="#707070"/></linearGradient>
<linearGradient id="bxs" x1="0" y1="0" x2="0" y2="1"><stop offset="0" stop-color="#d8d8d8"/><stop offset="1" stop-color="#4a4a4a"/></linearGradient>
</defs>
<path d="M904 189.3H919.3V203.8H904Z" fill="url(#bxf)"/>
<path d="M919.3 189.3L924.4 184.2V198.5L919.3 203.8Z" fill="url(#bxs)"/>
<circle cx="903" cy="205.3" r="10" fill="url(#sph)"/>
<path d="M922.3 217.4L927.7 212.2V217.4Z" fill="#1e2a34"/>
<!-- saved views cube -->
<path d="M937.5 193.5L945 185.5H966.5V205.5L958.5 214.5H937.5Z" fill="#a6dcf0"/>
<path d="M958.5 193.5L966.5 185.5V205.5L958.5 214.5Z" fill="#68b4c0"/>
<path d="M937.5 193.5L945 185.5H966.5L958.5 193.5" fill="none" stroke="#5ab0d8" stroke-width="0.8"/>
<rect x="937.5" y="193.5" width="21" height="21" fill="#fff" stroke="#5ab0d8" stroke-width="1"/>
<path d="M965.3 217.4L970.8 212.4V217.4Z" fill="#1e2a34"/>
<!-- views with list -->
<path d="M980.5 193.5L988.5 185.5H1008.5V205.5L1000.5 214H980.5Z" fill="#a6dcf0"/>
<path d="M1000.5 193.5L1008.5 185.5V205.5L1000.5 214Z" fill="#68b4c0"/>
<rect x="980.5" y="193.5" width="20.5" height="20.5" fill="#fff" stroke="#5ab0d8" stroke-width="1"/>
<rect x="1000.5" y="203" width="10" height="12" fill="#f4f4f4" stroke="#8a8a8a" stroke-width="0.8"/>
<path d="M1002.5 205.5h6M1002.5 207.8h6M1002.5 210.1h6M1002.5 212.4h6" stroke="#555" stroke-width="0.7"/>
<path d="M1010 217.4L1015.5 212.4V217.4Z" fill="#1e2a34"/>
<!-- table with camera -->
<rect x="1022.5" y="184.5" width="27" height="28.5" fill="#fafafa" stroke="#8a8a8a" stroke-width="0.9"/>
<path d="M1022.5 189.5h27M1022.5 194h27M1022.5 198.7h27M1022.5 203.5h27M1022.5 208.3h27M1029.5 189.5v23.5" stroke="#8a8a8a" stroke-width="0.8"/>
<rect x="1030" y="199" width="19" height="13.5" fill="#e6e6e6" opacity="0.8"/>
<path d="M1039.5 205.5h3l1.5-2.5h5l1.5 2.5h3.5v10h-14.5z" fill="#3a3a42"/>
<circle cx="1046.5" cy="210.5" r="3.8" fill="#8a8a92" stroke="#1a1a1a" stroke-width="1.2"/>
<circle cx="1046.5" cy="210.5" r="1.5" fill="#d0d0d8"/>
<!-- datum display -->
<g stroke="#8a6028" stroke-width="1.8">
<path d="M1065.5 185.5l8 8M1073.5 185.5l-8 8"/>
<path d="M1081.5 185l-2.2 4.5M1077.8 193l-2.2 4.5M1074 201l-2.2 4.5M1070.3 209l-2.2 4.5"/>
<path d="M1082 191l9 24M1094 191l-11 24M1077 203.5h20"/>
</g>
<path d="M1092 218.5L1097.5 213.3V218.5Z" fill="#1e2a34"/>
<!-- hidden items -->
<rect x="1107.5" y="184.5" width="21" height="12" fill="#ececec" stroke="#777" stroke-width="0.9"/>
<path d="M1128.5 190.5h10.5l-4.5 10" fill="none" stroke="#333" stroke-width="1"/>
<path d="M1131 200.5l3 3.5 2.5-4.5z" fill="#333"/>
<ellipse cx="1131.5" cy="211" rx="7" ry="4" fill="#2e3238"/>
<circle cx="1131.5" cy="211" r="2" fill="#fff"/>
<circle cx="1131.5" cy="211" r="0.9" fill="#2e3238"/>
<!-- tree nodes -->
<path d="M1153.5 188.5l10 11.5h14M1163.5 200l-9.5 12.5" fill="none" stroke="#2e3238" stroke-width="1.8"/>
<circle cx="1153.5" cy="188.5" r="4.3" fill="#8ec88a" stroke="#5a8a5a" stroke-width="0.8"/>
<circle cx="1177.5" cy="200" r="4.3" fill="#ee8a8a" stroke="#aa5a5a" stroke-width="0.8"/>
<circle cx="1154" cy="212.5" r="4.3" fill="#8ec0e0" stroke="#5a8aaa" stroke-width="0.8"/>
</g>

<!-- ===== status bar ===== -->
<g id="status">
<rect x="5" y="821" width="1590" height="2" fill="#7e7e8a"/>
<rect x="5" y="823" width="1590" height="1" fill="#d8ded8"/>
<rect x="5" y="824" width="1590" height="31" fill="#e8e8e8"/>
<!-- model tree toggle -->
<rect x="11.5" y="829.5" width="21" height="21" fill="#d9ded8" stroke="#a9b2aa"/>
<g fill="none" stroke="#1e2430" stroke-width="1.2"><rect x="19.5" y="832.5" width="2.8" height="2.8"/><rect x="19.5" y="838.5" width="2.8" height="2.8"/><rect x="19.5" y="844.5" width="2.8" height="2.8"/><rect x="26" y="838.5" width="2.8" height="2.8"/></g>
<path d="M21 835.5v3M21 841.5v3M22.5 840h3.5" stroke="#1e2430" stroke-width="0.7"/>
<!-- globe -->
<circle cx="48" cy="840" r="6.5" fill="#4aa0d8"/>
<circle cx="46" cy="838" r="3" fill="#8ad0f4"/>
<ellipse cx="48" cy="840" rx="9" ry="3.2" transform="rotate(-40 48 840)" fill="none" stroke="#333" stroke-width="0.9"/>
<!-- square -->
<rect x="66.5" y="832.5" width="15" height="15" rx="1" fill="#eef0ee" stroke="#1a5a7a" stroke-width="1.4"/>
<rect x="68" y="834" width="12" height="5" fill="#fafafa"/>
<rect x="94" y="829" width="1" height="22" fill="#9aa49a"/>
<circle cx="103.5" cy="837.5" r="2.5" fill="#1a5a7a"/>
<text x="111" y="842" textLength="235" lengthAdjust="spacingAndGlyphs" style="font-size:11.5px;fill:#2a2a34">PRT0001 regeneration completed successfully.</text>
<!-- right separators -->
<g fill="#a0a8a0"><rect x="1161" y="828" width="1" height="23"/><rect x="1190" y="828" width="1" height="23"/><rect x="1215" y="828" width="1" height="23"/><rect x="1255" y="828" width="1" height="23"/><rect x="1302" y="828" width="1" height="23"/></g>
<!-- regen icon disabled -->
<rect x="1195.5" y="839.5" width="5" height="5" rx="1" fill="#fafafa" stroke="#c8c8c8"/>
<path d="M1199 838l3-4 2 2M1204 832l3 3-3 3" fill="none" stroke="#a8a8a8" stroke-width="1.3"/>
<!-- flag -->
<path d="M1221.5 830v15" stroke="#a0a8a0" stroke-width="1"/>
<path d="M1222 830l9 3.5-9 3.5z" fill="#a8b0b8"/>
<!-- binoculars -->
<rect x="1258.5" y="827.5" width="41" height="22" fill="#fff" stroke="#c8ccc8"/>
<rect x="1285" y="828" width="1" height="21" fill="#dde0dd"/>
<rect x="1264" y="832" width="3" height="4" fill="#444"/><rect x="1272" y="832" width="3" height="4" fill="#444"/>
<path d="M1263 836h5v11h-5.5q-0.5-6 0.5-11zM1271 836h5q1 5 0.5 11h-5.5z" fill="#5a5a62"/>
<path d="M1267 838h5v5h-5z" fill="#222"/>
<path d="M1264 837h2v9h-2zM1272 837h2v9h-2z" fill="#9a9aa2"/>
<path d="M1289.5 838h7.5l-3.75 3.5z" fill="#6a625a"/>
<!-- geometry dropdown -->
<rect x="1400.5" y="827.5" width="176" height="22" fill="#fff" stroke="#a9b2aa"/>
<rect x="1561" y="828" width="1" height="21" fill="#c8ccc8"/>
<text x="1408" y="843" textLength="52" lengthAdjust="spacingAndGlyphs" style="font-size:12px;fill:#2a2a34">Geometry</text>
<path d="M1565 838h7.5l-3.75 3.5z" fill="#6a625a"/>
<path d="M1582 852l9-9M1586 852l5-5M1590 852l1-1" stroke="#b0b4b0" stroke-width="0.9"/>
<rect x="5" y="855" width="1590" height="1" fill="#c4c4c4"/>
</g>
</svg>
</body>
</html>
